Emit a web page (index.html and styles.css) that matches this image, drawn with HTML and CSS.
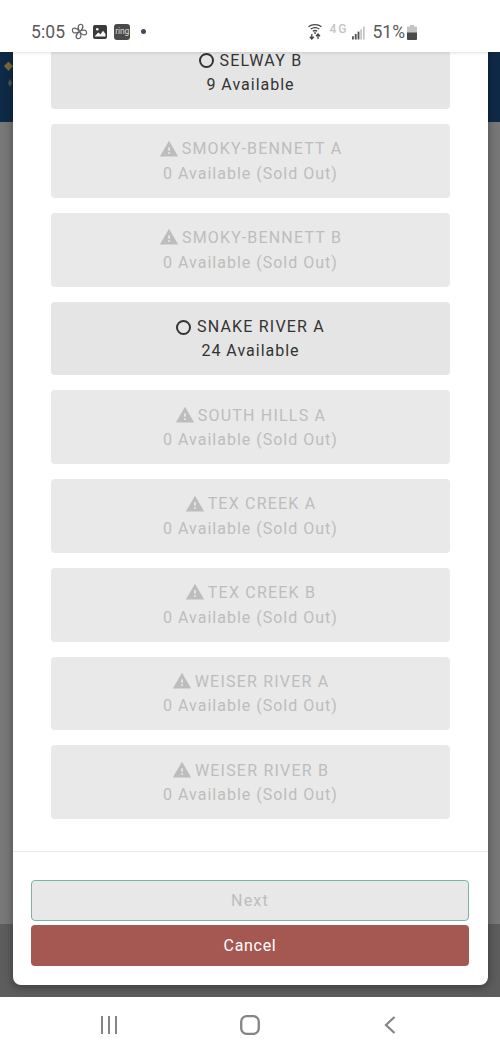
FILE: index.html
```html
<!DOCTYPE html>
<html lang="en">
<head>
<meta charset="utf-8">
<title>Select a unit</title>
<link rel="stylesheet" href="styles.css">
</head>
<body>
<div class="phone">
  <header class="status">
    <div class="status-left">
      <span class="clock">5:05</span>
      <svg class="ic-fan" viewBox="0 0 16 16" fill="none" stroke="#666" stroke-width="1.2"><path d="M8 8C6.800 6 6.400 4 7 2.500 7.800 .8 11 .9 11.200 2.900 11.300 4.800 9.500 7 8 8ZM8 8C10 6.800 12 6.400 13.500 7 15.200 7.800 15.100 11 13.100 11.200 11.200 11.300 9 9.500 8 8ZM8 8C9.200 10 9.600 12 9 13.500 8.200 15.200 5 15.100 4.800 13.100 4.700 11.200 6.500 9 8 8ZM8 8C6 9.200 4 9.600 2.500 9 .8 8.200 .9 5 2.900 4.800 4.800 4.700 7 6.500 8 8Z"/></svg>
      <svg class="ic-pic" viewBox="0 0 14 14"><rect width="14" height="14" rx="2" fill="#3a3a3a"/><circle cx="4.300" cy="4.300" r="1.300" fill="#fff"/><path d="M1.500 11.500 5.200 7.500 7.500 9.300 10 5.800 12.500 9V11.500Z" fill="#fff"/></svg>
      <span class="ring">ring</span>
      <span class="dot"></span>
    </div>
    <div class="status-right">
      <svg class="ic-wifi" viewBox="0 0 16 17" fill="none" stroke="#444" stroke-width="1.300"><path d="M1.500 3.700C5 .9 11 .9 14.500 3.700M3.700 6C6.200 4.300 9.800 4.300 12.300 6M5.800 8.200C7.100 7.400 8.900 7.400 10.200 8.200"/><circle cx="8" cy="10" r=".9" fill="#444" stroke="none"/><path d="M4.800 11V16M2.800 13.800 4.800 16 6.800 13.800M11 16V11M9 13.200 11 11 13 13.200"/></svg>
      <span class="net">4G</span>
      <svg class="ic-bars" viewBox="0 0 14 14"><rect x="0" y="10.500" width="2" height="3.500" fill="#555"/><rect x="3" y="8" width="2" height="6" fill="#555"/><rect x="6" y="5.500" width="2" height="8.500" fill="#555"/><rect x="9" y="3" width="1.600" height="11" fill="#bbb"/><rect x="12" y="0" width="1.600" height="14" fill="#bbb"/></svg>
      <span class="pct">51%</span>
      <svg class="ic-batt" viewBox="0 0 10 15"><path d="M3 0H7V1.500H9A1 1 0 0 1 10 2.500V14A1 1 0 0 1 9 15H1A1 1 0 0 1 0 14V2.500A1 1 0 0 1 1 1.500H3Z" fill="#c4c4c4"/><path d="M0 7.500H10V14A1 1 0 0 1 9 15H1A1 1 0 0 1 0 14Z" fill="#4a4a4a"/></svg>
    </div>
  </header>

  <main class="stage">
    <div class="banner">
      <svg class="crest" viewBox="0 0 13 40"><path d="M4 14 8.500 9.500 13 14 8.500 19Z" fill="#7a6a3c"/><path d="M8 31 10 27 12 31 10 35Z" fill="#4d5a55"/></svg>
    </div>
    <div class="backdrop"></div>
    <div class="backdrop-foot"></div>

    <section class="modal">
      <div class="list">
        <button class="card">
          <span class="card-title"><span class="radio"></span>SELWAY B</span>
          <span>9 Available</span>
        </button>
        <button class="card off">
          <span class="card-title"><svg class="warn" viewBox="0 0 24 24"><path d="M1 21h22L12 2 1 21zm12-3h-2v-2h2v2zm0-4h-2v-4h2v4z"/></svg>SMOKY-BENNETT A</span>
          <span>0 Available (Sold Out)</span>
        </button>
        <button class="card off">
          <span class="card-title"><svg class="warn" viewBox="0 0 24 24"><path d="M1 21h22L12 2 1 21zm12-3h-2v-2h2v2zm0-4h-2v-4h2v4z"/></svg>SMOKY-BENNETT B</span>
          <span>0 Available (Sold Out)</span>
        </button>
        <button class="card">
          <span class="card-title"><span class="radio"></span>SNAKE RIVER A</span>
          <span>24 Available</span>
        </button>
        <button class="card off">
          <span class="card-title"><svg class="warn" viewBox="0 0 24 24"><path d="M1 21h22L12 2 1 21zm12-3h-2v-2h2v2zm0-4h-2v-4h2v4z"/></svg>SOUTH HILLS A</span>
          <span>0 Available (Sold Out)</span>
        </button>
        <button class="card off">
          <span class="card-title"><svg class="warn" viewBox="0 0 24 24"><path d="M1 21h22L12 2 1 21zm12-3h-2v-2h2v2zm0-4h-2v-4h2v4z"/></svg>TEX CREEK A</span>
          <span>0 Available (Sold Out)</span>
        </button>
        <button class="card off">
          <span class="card-title"><svg class="warn" viewBox="0 0 24 24"><path d="M1 21h22L12 2 1 21zm12-3h-2v-2h2v2zm0-4h-2v-4h2v4z"/></svg>TEX CREEK B</span>
          <span>0 Available (Sold Out)</span>
        </button>
        <button class="card off">
          <span class="card-title"><svg class="warn" viewBox="0 0 24 24"><path d="M1 21h22L12 2 1 21zm12-3h-2v-2h2v2zm0-4h-2v-4h2v4z"/></svg>WEISER RIVER A</span>
          <span>0 Available (Sold Out)</span>
        </button>
        <button class="card off">
          <span class="card-title"><svg class="warn" viewBox="0 0 24 24"><path d="M1 21h22L12 2 1 21zm12-3h-2v-2h2v2zm0-4h-2v-4h2v4z"/></svg>WEISER RIVER B</span>
          <span>0 Available (Sold Out)</span>
        </button>
      </div>
      <footer class="actions">
        <button class="btn btn-next">Next</button>
        <button class="btn btn-cancel">Cancel</button>
      </footer>
    </section>
  </main>

  <nav class="navbar">
    <svg class="nav-recent" viewBox="0 0 18 18"><path d="M2 0V18M9 0V18M16 0V18" stroke="#858585" stroke-width="2" fill="none"/></svg>
    <svg class="nav-home" viewBox="0 0 20 20"><rect x="1.200" y="1.200" width="17.600" height="17.600" rx="5.500" fill="none" stroke="#858585" stroke-width="2.300"/></svg>
    <svg class="nav-back" viewBox="0 0 12 18"><path d="M10.500 1 2 9 10.500 17" fill="none" stroke="#858585" stroke-width="2.200"/></svg>
  </nav>
</div>
</body>
</html>
```

FILE: styles.css
```css
* { box-sizing: border-box; }
html, body { margin: 0; padding: 0; }
body { width: 500px; height: 1056px; overflow: hidden; font-family: Roboto, "Liberation Sans", sans-serif; background: #fff; }
.phone { display: flex; flex-direction: column; height: 1056px; }

.status { height: 52px; flex: none; background: #fff; display: flex; justify-content: space-between; align-items: center; padding: 11px 83px 0 31px; position: relative; z-index: 3; box-shadow: 0 1px 3px rgba(0,0,0,.12); color: #555; }
.status-left, .status-right { display: flex; align-items: center; }
.clock { font-size: 17.500px; letter-spacing: .1px; color: #5a5a5a; margin-right: 6px; }
.ic-fan { width: 17px; height: 17px; margin-right: 5px; }
.ic-pic { width: 14px; height: 14px; margin-right: 7px; }
.ring { width: 16px; height: 16px; border-radius: 3px; background: #4a4a4a; color: #ddd; font-size: 8.500px; line-height: 15px; text-align: center; letter-spacing: -.2px; margin-right: 11px; }
.dot { width: 5px; height: 5px; border-radius: 50%; background: #4a4a4a; }
.ic-wifi { width: 16px; height: 17px; margin-right: 7px; }
.net { font-size: 12px; font-weight: 500; color: #c4c4c4; width: 19px; margin-right: 3px; margin-top: -6px; letter-spacing: 2px; white-space: nowrap; }
.ic-bars { width: 13px; height: 14px; margin-right: 8px; margin-top: 2px; }
.pct { font-size: 17.500px; color: #5a5a5a; margin-right: 2px; }
.ic-batt { width: 10px; height: 15px; margin-top: 1px; }

.stage { flex: 1; position: relative; overflow: hidden; background: #757575; }
.banner { height: 70px; background: #0f2a47; }
.crest { display: block; width: 13px; height: 40px; }
.backdrop { height: 802px; background: #787878; }
.backdrop-foot { height: 73px; background: #5d5d5d; }

.modal { position: absolute; left: 13px; right: 12px; top: 0; bottom: 12px; background: #fff; border-radius: 0 0 8px 8px; box-shadow: 0 2px 10px rgba(0,0,0,.4); display: flex; flex-direction: column; overflow: hidden; }
.list { flex: 1; min-height: 0; display: flex; flex-direction: column; justify-content: flex-end; gap: 15px; padding: 0 38px 32px; }
.card { flex: none; height: 73.750px; border: 0; border-radius: 4px; background: #e5e5e5; color: #333; font: 400 16px/24.500px Roboto, "Liberation Sans", sans-serif; letter-spacing: 1px; display: flex; flex-direction: column; align-items: center; justify-content: center; padding: 2px 0 0; }
.card.off { color: #bdbdbd; background: #e9e9e9; }
.card-title { display: flex; align-items: center; letter-spacing: 1.200px; }
.radio { width: 15px; height: 15px; border: 2.500px solid #333; border-radius: 50%; margin-right: 6px; }
.warn { width: 20px; height: 20px; fill: #bdbdbd; margin-right: 3px; margin-top: -2px; }

.actions { flex: none; border-top: 1px solid #e8e8e8; padding: 28px 19px 19px 18px; display: flex; flex-direction: column; gap: 4px; }
.btn { height: 41px; border-radius: 4px; font: 400 16px Roboto, "Liberation Sans", sans-serif; padding: 0; }
.btn-next { background: #e8e8e8; border: 1px solid #7fb0a2; color: #bdbdbd; letter-spacing: 1.200px; box-shadow: inset 0 2px 0 #e0eeea; }
.btn-cancel { background: #a55852; border: 0; color: #fff; letter-spacing: .7px; }

.navbar { height: 59px; flex: none; background: #fff; position: relative; z-index: 3; display: flex; align-items: center; padding: 0 104px 4px 100px; justify-content: space-between; }
.nav-recent { width: 18px; height: 18px; }
.nav-home { width: 20px; height: 20px; margin-left: -2px; }
.nav-back { width: 12px; height: 18px; }
```
